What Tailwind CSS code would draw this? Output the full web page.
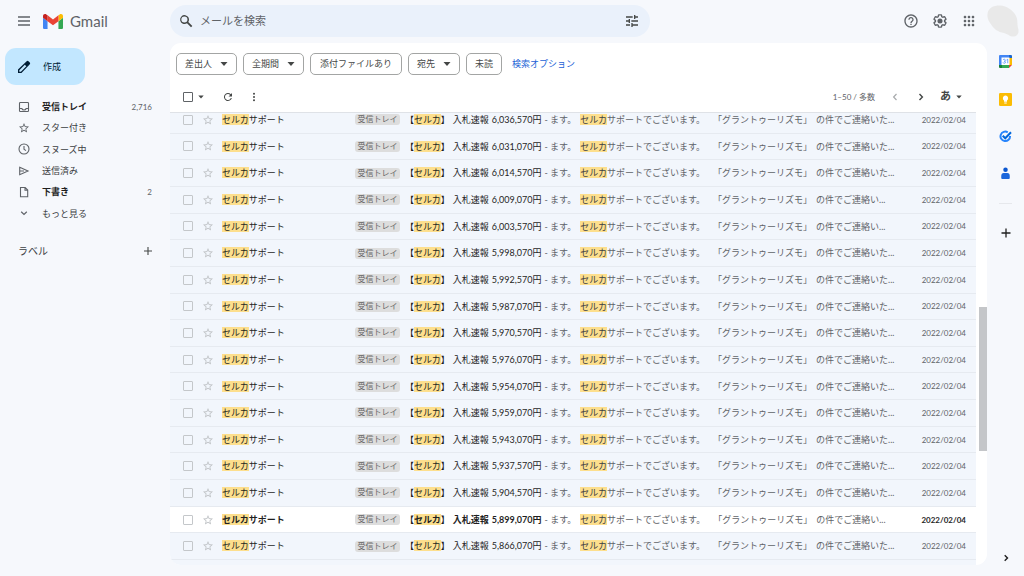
<!DOCTYPE html>
<html lang="ja">
<head>
<meta charset="utf-8">
<meta name="viewport" content="width=device-width, initial-scale=1">
<title>Gmail</title>
<script src="https://cdn.jsdelivr.net/npm/@tailwindcss/browser@4"></script>
</head>
<body class="h-screen overflow-hidden bg-[#f6f8fc] font-['Lato','Noto_Sans_CJK_JP',sans-serif] text-[9px] text-[#3c4043]">
<div class="flex h-full flex-col">

  <header class="flex h-[43px] shrink-0 items-center pb-[1px]">
    <div class="flex w-[170px] shrink-0 items-center pl-[17px]">
      <button type="button" aria-label="メインメニュー" class="mr-3 text-[#5f6368]">
        <svg class="size-[14px]" viewBox="0 0 14 14" fill="none" stroke="currentColor" stroke-width="1.3"><path d="M1 3h12M1 7h12M1 11h12"/></svg>
      </button>
      <a href="#" class="flex items-center gap-[7px]">
        <svg class="h-[15px] w-5" viewBox="52 42 88 66" aria-hidden="true"><path fill="#4285f4" d="M58 108h14V74L52 59v43c0 3.32 2.69 6 6 6"/><path fill="#34a853" d="M120 108h14c3.32 0 6-2.69 6-6V59l-20 15"/><path fill="#fbbc04" d="M120 48v26l20-15v-8c0-7.42-8.47-11.65-14.4-7.2"/><path fill="#ea4335" d="M72 74V48l24 18 24-18v26L96 92"/><path fill="#c5221f" d="M52 51v8l20 15V48l-5.6-4.2c-5.94-4.45-14.4-.22-14.4 7.2"/></svg>
        <span class="text-[15px] leading-5 text-[#5f6368]">Gmail</span>
      </a>
    </div>
    <form class="flex h-8 max-w-[480px] flex-1 items-center rounded-full bg-[#eaf1fb] px-2">
      <button type="button" aria-label="検索" class="mr-[6px] text-[#444746]">
        <svg class="size-4" viewBox="0 0 24 24" fill="currentColor"><path d="M21.500 19.500l-6-6a6.700 6.700 0 1 0-2 2l6 6zM5 9.700a4.600 4.600 0 1 1 9.200 0a4.600 4.600 0 0 1-9.200 0z"/></svg>
      </button>
      <input type="text" aria-label="メールを検索" placeholder="メールを検索" class="min-w-0 flex-1 bg-transparent text-[11px] leading-4 outline-none placeholder:text-[#5f6368]">
      <button type="button" aria-label="検索オプションを表示" class="mr-[2px] text-[#444746]">
        <svg class="size-4" viewBox="0 0 24 24" fill="currentColor"><path d="M3 17v2h6v-2H3zM3 5v2h10V5H3zm10 16v-2h8v-2h-8v-2h-2v6h2zM7 9v2H3v2h4v2h2V9H7zm14 4v-2H11v2h10zm-6-4h2V7h4V5h-4V3h-2v6z"/></svg>
      </button>
    </form>
    <div class="ml-auto flex items-center pr-[5px] text-[#5f6368]">
      <button type="button" aria-label="サポート" class="mr-[13px]"><svg class="size-4" viewBox="0 0 24 24" fill="currentColor"><path d="M11 18h2v-2h-2v2zm1-16C6.480 2 2 6.480 2 12s4.480 10 10 10 10-4.480 10-10S17.520 2 12 2zm0 18c-4.410 0-8-3.590-8-8s3.590-8 8-8 8 3.590 8 8-3.590 8-8 8zm0-14c-2.210 0-4 1.790-4 4h2c0-1.100.9-2 2-2s2 .9 2 2c0 2-3 1.750-3 5h2c0-2.250 3-2.500 3-5 0-2.210-1.790-4-4-4z"/></svg></button>
      <button type="button" aria-label="設定" class="mr-[13px]"><svg class="size-4" viewBox="0 0 24 24" fill="currentColor"><path d="M13.850 22.250h-3.700c-.74 0-1.360-.54-1.450-1.270l-.27-1.890c-.27-.14-.53-.29-.79-.46l-1.800.72c-.7.260-1.470-.03-1.810-.65L2.200 15.530c-.35-.66-.2-1.440.36-1.880l1.530-1.190c-.01-.15-.02-.3-.02-.46 0-.15.010-.31.020-.46l-1.520-1.190c-.59-.45-.74-1.260-.37-1.880l1.850-3.190c.34-.62 1.110-.9 1.790-.63l1.810.73c.26-.17.52-.32.78-.46l.27-1.910c.09-.7.710-1.250 1.440-1.250h3.700c.74 0 1.360.54 1.450 1.270l.27 1.890c.27.140.53.290.79.460l1.800-.72c.71-.26 1.480.030 1.820.65l1.840 3.180c.36.660.2 1.440-.36 1.880l-1.520 1.190c.01.150.020.3.020.46s-.01.310-.02.460l1.520 1.190c.56.450.72 1.230.37 1.860l-1.860 3.220c-.34.620-1.110.9-1.800.63l-1.800-.72c-.26.170-.52.320-.78.460l-.27 1.910c-.1.680-.72 1.220-1.460 1.220zm-3.230-2h2.760l.37-2.550.53-.22c.44-.18.880-.44 1.340-.78l.45-.34 2.380.96 1.380-2.400-2.030-1.580.07-.56c.03-.26.060-.51.060-.78s-.03-.53-.06-.78l-.07-.56 2.030-1.580-1.390-2.400-2.390.96-.45-.35c-.42-.32-.87-.58-1.330-.77l-.52-.22-.37-2.550h-2.760l-.37 2.550-.53.210c-.44.190-.88.440-1.340.79l-.45.330-2.380-.95-1.390 2.390 2.030 1.580-.07.560a7 7 0 0 0-.06.790c0 .26.020.53.060.78l.07.560-2.030 1.580 1.380 2.400 2.390-.96.450.35c.43.330.86.580 1.330.77l.53.220.38 2.550z"/><circle cx="12" cy="12" r="3.800"/></svg></button>
      <button type="button" aria-label="Google アプリ" class="mr-[10px]"><svg class="size-4" viewBox="0 0 24 24" fill="currentColor"><path d="M6 8c1.100 0 2-.9 2-2s-.9-2-2-2-2 .9-2 2 .9 2 2 2zm6 12c1.100 0 2-.9 2-2s-.9-2-2-2-2 .9-2 2 .9 2 2 2zm-6 0c1.100 0 2-.9 2-2s-.9-2-2-2-2 .9-2 2 .9 2 2 2zm0-6c1.100 0 2-.9 2-2s-.9-2-2-2-2 .9-2 2 .9 2 2 2zm6 0c1.100 0 2-.9 2-2s-.9-2-2-2-2 .9-2 2 .9 2 2 2zm4-8c0 1.100.9 2 2 2s2-.9 2-2-.9-2-2-2-2 .9-2 2zm-4 2c1.100 0 2-.9 2-2s-.9-2-2-2-2 .9-2 2 .9 2 2 2zm6 6c1.100 0 2-.9 2-2s-.9-2-2-2-2 .9-2 2 .9 2 2 2zm0 6c1.100 0 2-.9 2-2s-.9-2-2-2-2 .9-2 2 .9 2 2 2z"/></svg></button>
      <button type="button" aria-label="アカウント"><svg class="size-8" viewBox="0 0 32 32" fill="#e9e9e9"><path d="M0.500 9C1 3 6 .5 13 .5C20 1 26 5 29 11C31 15 30 18 31 23C32.500 27 31 31 27 31.500C23 32 21 29 17 28C11 27 7 24 4.500 20C1.500 16 0 13 .5 9z"/></svg></button>
    </div>
  </header>

  <div class="flex min-h-0 flex-1">
    <nav aria-label="メール" class="w-[170px] shrink-0 pt-[5px]">
      <button type="button" class="ml-[5px] flex h-[37px] w-20 items-center rounded-[11px] bg-[#c2e7ff] pl-[11px] text-[#001d35]">
        <svg class="mr-[11px] size-4" viewBox="0 0 24 24" fill="currentColor"><path d="M20.400 4.900l-1.700-1.700a1.900 1.900 0 0 0-2.700 0L3 15.800V21h5.200L20.400 8.300a2.300 2.300 0 0 0 0-3.400zM7.300 19H5v-2.300l8.200-8.200 2.300 2.300z"/></svg>
        <span>作成</span>
      </button>
      <ul class="mt-[11px] grid h-32 grid-rows-6 pr-[18px] pl-[18px]">
        <li class="flex"><a href="#" class="flex flex-1 items-center text-[#1f1f1f]"><svg class="mr-3 size-3" viewBox="0 0 12 12" fill="none" stroke="#5f6368" stroke-width="1.1"><rect x="1.500" y="1.500" width="9" height="9" rx=".8"/><path d="M1.500 7.500h2.300q.5 1.500 2.200 1.500t2.200-1.500h2.300"/></svg><span class="flex-1 font-bold">受信トレイ</span><span class="text-[8px] text-[#5f6368]">2,716</span></a></li>
        <li class="flex"><a href="#" class="flex flex-1 items-center"><svg class="mr-3 size-3" viewBox="0 0 24 24" fill="#5f6368"><path d="M22 9.240l-7.190-.62L12 2 9.190 8.630 2 9.240l5.460 4.730L5.820 21 12 17.270 18.180 21l-1.630-7.030L22 9.240zM12 15.400l-3.760 2.270 1-4.280-3.320-2.880 4.380-.38L12 6.100l1.710 4.040 4.380.38-3.320 2.880 1 4.280L12 15.400z"/></svg><span>スター付き</span></a></li>
        <li class="flex"><a href="#" class="flex flex-1 items-center"><svg class="mr-3 size-3" viewBox="0 0 12 12" fill="none" stroke="#5f6368" stroke-width="1.1"><circle cx="6" cy="6" r="5"/><path d="M6 3v3.300l2 1.300"/></svg><span>スヌーズ中</span></a></li>
        <li class="flex"><a href="#" class="flex flex-1 items-center"><svg class="mr-3 size-3" viewBox="0 0 12 12" fill="none" stroke="#5f6368" stroke-width="1.1"><path d="M1.700 2.300L10 6 1.700 9.700zM1.700 6H6"/></svg><span>送信済み</span></a></li>
        <li class="flex"><a href="#" class="flex flex-1 items-center text-[#1f1f1f]"><svg class="mr-3 size-3" viewBox="0 0 12 12" fill="none" stroke="#5f6368" stroke-width="1.100"><path d="M2.500 1.500h4.700l2.500 2.500v6.800H2.500zM7 1.500V4.200h2.700"/></svg><span class="flex-1 font-bold">下書き</span><span class="text-[8px] text-[#5f6368]">2</span></a></li>
        <li class="flex"><a href="#" class="flex flex-1 items-center"><svg class="mr-3 size-3" viewBox="0 0 12 12" fill="none" stroke="#5f6368" stroke-width="1.200"><path d="M3.200 4.800L6 7.500l2.800-2.700"/></svg><span>もっと見る</span></a></li>
      </ul>
      <div class="mt-5 flex h-[13px] items-center justify-between pr-4 pl-[18px]">
        <h2 class="text-[10px] leading-3">ラベル</h2>
        <button type="button" aria-label="新しいラベルを作成"><svg class="size-3" viewBox="0 0 12 12" stroke="#444746" stroke-width="1.100"><path d="M6 2v8M2 6h8"/></svg></button>
      </div>
    </nav>

    <main class="mb-[11px] flex min-w-0 flex-1 flex-col overflow-hidden rounded-[11px] bg-white">
      <div class="flex h-[42px] shrink-0 items-center gap-[6px] pl-[6px] text-[#444746]">
        <button type="button" class="flex h-[22px] items-center gap-2 rounded-[5px] border border-[#a3a5a4] px-2">差出人<svg class="h-[4px] w-[8px]" viewBox="0 0 8 4" fill="currentColor"><path d="M.5 0h7L4 4z"/></svg></button>
        <button type="button" class="flex h-[22px] items-center gap-2 rounded-[5px] border border-[#a3a5a4] px-2">全期間<svg class="h-[4px] w-[8px]" viewBox="0 0 8 4" fill="currentColor"><path d="M.5 0h7L4 4z"/></svg></button>
        <button type="button" class="h-[22px] rounded-[5px] border border-[#a3a5a4] px-[9px]">添付ファイルあり</button>
        <button type="button" class="flex h-[22px] items-center gap-2 rounded-[5px] border border-[#a3a5a4] px-2">宛先<svg class="h-[4px] w-[8px]" viewBox="0 0 8 4" fill="currentColor"><path d="M.5 0h7L4 4z"/></svg></button>
        <button type="button" class="h-[22px] rounded-[5px] border border-[#a3a5a4] px-2">未読</button>
        <a href="#" class="ml-1 text-[#1a62d6]">検索オプション</a>
      </div>
      <div class="flex h-[27px] shrink-0 items-center pr-[25px] pb-1 pl-[13px] text-[#444746]">
        <input type="checkbox" aria-label="すべて選択" class="size-[10px] appearance-none rounded-[1px] border border-[#5f6368] bg-white outline-1 -outline-offset-1 outline-[#5f6368]/30">
        <button type="button" aria-label="選択メニュー" class="ml-[5px]"><svg class="h-[4px] w-[6px]" viewBox="0 0 6 4" fill="currentColor"><path d="M.3.500h5.400L3 3.500z"/></svg></button>
        <button type="button" aria-label="更新" class="ml-[18px]"><svg class="size-3" viewBox="0 0 24 24" fill="currentColor"><path d="M17.650 6.350A8 8 0 1 0 19.730 14h-2.080A6 6 0 1 1 12 6c1.660 0 3.140.69 4.220 1.780L13 11h7V4z"/></svg></button>
        <button type="button" aria-label="その他" class="ml-[14px]"><svg class="size-3" viewBox="0 0 12 12" fill="currentColor"><circle cx="6" cy="2.700" r="1"/><circle cx="6" cy="6" r="1"/><circle cx="6" cy="9.300" r="1"/></svg></button>
        <span class="ml-auto text-[8px] text-[#5f6368]">1–50 / 多数</span>
        <button type="button" aria-label="前へ" class="ml-[14px] text-[#a8abad]"><svg class="size-3" viewBox="0 0 12 12" fill="none" stroke="currentColor" stroke-width="1.200"><path d="M7.500 3L4.600 6l2.900 3"/></svg></button>
        <button type="button" aria-label="次へ" class="ml-[14px]"><svg class="size-3" viewBox="0 0 12 12" fill="none" stroke="currentColor" stroke-width="1.400"><path d="M4.500 3l2.900 3-2.900 3"/></svg></button>
        <button type="button" aria-label="入力ツール" class="ml-[13px] flex items-center gap-[5px] text-[11px] font-bold">あ<svg class="h-[4px] w-[6px]" viewBox="0 0 6 4" fill="currentColor"><path d="M.3.500h5.400L3 3.500z"/></svg></button>
      </div>
      <div class="flex min-h-0 flex-1">
        <div class="min-w-0 flex-1 overflow-hidden border-t border-[#dfe2e7] bg-[#f2f6fc] pb-[6px]">
          <ul id="mails" class="-mt-[6px] grid h-[calc(100%+7px)] auto-rows-fr"></ul>
        </div>
        <div class="flex w-[11px] shrink-0 flex-col items-end">
          <div class="h-[43%]"></div>
          <div class="h-36 w-2 bg-[#c4c6c9]"></div>
        </div>
      </div>
    </main>

    <aside aria-label="サイドパネル" class="flex w-[37px] shrink-0 flex-col items-center pt-3 pb-3">
      <button type="button" aria-label="カレンダー"><svg class="size-[13px]" viewBox="0 0 26 26"><path fill="#4285f4" d="M0 2q0-2 2-2h18v6H6v14H0z"/><path fill="#1967d2" d="M20 0h4q2 0 2 2v4h-6z"/><path fill="#fbbc04" d="M20 6h6v14h-6z"/><path fill="#34a853" d="M6 20h14v6H6z"/><path fill="#188038" d="M0 20h6v6H2q-2 0-2-2z"/><path fill="#ea4335" d="M20 20h6l-6 6z"/><path fill="#fff" d="M5 5h16v15H5z"/><path fill="none" stroke="#4285f4" stroke-width="1.500" d="M8 10q1-2 3-1.500t1.500 2.500q-.5 1.500-2 1.500q2.500 0 2.500 2t-2.500 2q-2 0-2.500-1.500M15 10l2.500-1.500v8"/></svg></button>
      <button type="button" aria-label="Keep" class="mt-[25px]"><svg class="size-[13px]" viewBox="0 0 26 26"><rect width="26" height="26" rx="2.500" fill="#fbbc04"/><path fill="#fff" d="M13 5a5.500 5.500 0 0 0-3 10v2.500h6V15a5.500 5.500 0 0 0-3-10zM10.500 19h5v1.800h-5z"/></svg></button>
      <button type="button" aria-label="ToDo リスト" class="mt-[24px]"><svg class="size-[13px]" viewBox="0 0 26 26" fill="none"><path stroke="#2684fc" stroke-width="4" d="M17.500 4.600A9.500 9.500 0 1 0 22 12"/><path stroke="#0066da" stroke-width="4" d="M7.500 11.500l5 5L24 4.500"/></svg></button>
      <button type="button" aria-label="連絡先" class="mt-[24px]"><svg class="size-[13px]" viewBox="0 0 26 26"><circle cx="13" cy="5.500" r="4.500" fill="#0b57d0"/><path fill="#1a66dc" d="M4.500 18q0-6 5-6h7q5 0 5 6v4q0 2-2 2h-13q-2 0-2-2z"/></svg></button>
      <hr class="mt-[23px] w-[13px] border-[#e6e8ec]">
      <button type="button" aria-label="アドオンを取得" class="mt-[23px]"><svg class="size-3" viewBox="0 0 12 12" stroke="#1f1f1f" stroke-width="1.300"><path d="M6 1.500v9M1.500 6h9"/></svg></button>
      <button type="button" aria-label="サイドパネルを非表示" class="mt-auto"><svg class="size-3" viewBox="0 0 12 12" fill="none" stroke="#1f1f1f" stroke-width="1.400"><path d="M4.700 3.200L7.500 6l-2.800 2.800"/></svg></button>
    </aside>
  </div>
</div>

<script>
const mails = [
  ['6,036,570円', 'いた'], ['6,031,070円', 'いた'], ['6,014,570円', 'いた'], ['6,009,070円', 'い'],
  ['6,003,570円', 'い'], ['5,998,070円', 'いた'], ['5,992,570円', 'いた'], ['5,987,070円', 'いた'],
  ['5,970,570円', 'いた'], ['5,976,070円', 'いた'], ['5,954,070円', 'いた'], ['5,959,070円', 'いた'],
  ['5,943,070円', 'いた'], ['5,937,570円', 'いた'], ['5,904,570円', 'いた'], ['5,899,070円', 'い', true],
  ['5,866,070円', 'いた']
];
document.getElementById('mails').innerHTML = mails.map(([price, tail, unread], i) => `
  <li class="flex items-center border-b border-[#e6eaf0] pr-[10px] pl-[13px] whitespace-nowrap ${unread ? 'bg-white' : ''}">
    <input type="checkbox" id="m${i}" aria-label="メール ${price} を選択" class="size-[10px] shrink-0 appearance-none rounded-[1px] border border-[#c4c7ca]">
    <button type="button" aria-label="スター" class="ml-[9px] shrink-0"><svg class="size-3" viewBox="0 0 24 24" fill="#bfc2c5"><path d="M22 9.240l-7.190-.62L12 2 9.190 8.630 2 9.240l5.460 4.730L5.820 21 12 17.270 18.180 21l-1.630-7.030L22 9.240zM12 15.400l-3.760 2.270 1-4.280-3.320-2.880 4.380-.38L12 6.100l1.710 4.040 4.380.38-3.320 2.880 1 4.280L12 15.400z"/></svg></button>
    <label for="m${i}" class="ml-2 w-[133px] shrink-0 text-[#1f1f1f] ${unread ? 'font-bold' : ''}"><mark class="bg-[#fddf8d] text-inherit">セルカ</mark>サポート</label>
    <span class="w-[45px] shrink-0 rounded-[3px] bg-[#dddddd] text-center text-[8px] leading-[11px] text-[#666666]">受信トレイ</span>
    <a href="#" class="ml-[5px] flex min-w-0 flex-1 items-center text-[#5f6368]">
      <span class="flex gap-[3px] text-[#1f1f1f] ${unread ? 'font-bold' : ''}"><span>【<mark class="bg-[#fddf8d] text-inherit">セルカ</mark>】</span><span>入札速報</span><span>${price}</span></span>
      <span class="ml-[3px]">- ます。</span>
      <span class="ml-1"><mark class="bg-[#fddf8d] text-[#3c4043]">セルカ</mark>サポートでございます。</span>
      <span class="ml-2">「グラントゥーリズモ」</span>
      <span class="ml-1">の件でご連絡${tail}...</span>
    </a>
    <time datetime="2022-02-04" class="text-[8px] ${unread ? 'font-bold text-[#1f1f1f]' : 'text-[#5f6368]'}">2022/02/04</time>
  </li>`).join('');
</script>
</body>
</html>
